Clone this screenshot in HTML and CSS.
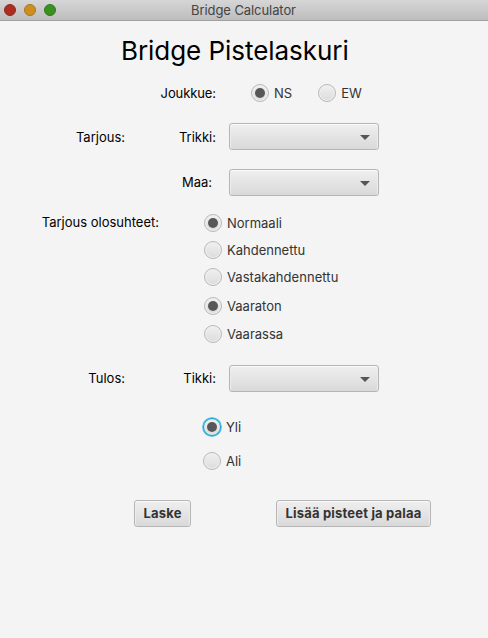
FILE: index.html
```html
<!DOCTYPE html>
<html lang="fi">
<head>
<meta charset="utf-8">
<title>Bridge Calculator</title>
<link rel="stylesheet" href="styles.css">
</head>
<body>
<header class="titlebar">
  <div class="lights"><i class="light red"></i><i class="light yellow"></i><i class="light green"></i></div>
  <span class="caption">Bridge Calculator</span>
</header>
<main>
  <h1>Bridge Pistelaskuri</h1>
  <section class="row team">
    <span class="label"></span><span class="sub joukkue">Joukkue:</span>
    <div class="teams">
      <div class="radio on"><i></i><span>NS</span></div>
      <div class="radio"><i></i><span>EW</span></div>
    </div>
  </section>
  <section class="row trick">
    <span class="label">Tarjous:</span><span class="sub">Trikki:</span><div class="combo"></div>
  </section>
  <section class="row suit">
    <span class="label"></span><span class="sub maa">Maa:</span><div class="combo"></div>
  </section>
  <section class="row terms">
    <span class="label wide">Tarjous olosuhteet:</span>
    <div class="options">
      <div class="radio on"><i></i><span>Normaali</span></div>
      <div class="radio"><i></i><span>Kahdennettu</span></div>
      <div class="radio"><i></i><span class="vasta">Vastakahdennettu</span></div>
      <div class="radio on"><i></i><span>Vaaraton</span></div>
      <div class="radio"><i></i><span>Vaarassa</span></div>
    </div>
  </section>
  <section class="row result">
    <span class="label">Tulos:</span><span class="sub">Tikki:</span><div class="combo"></div>
  </section>
  <section class="overunder">
    <div class="radio on focus"><i></i><span>Yli</span></div>
    <div class="radio"><i></i><span>Ali</span></div>
  </section>
  <footer class="actions">
    <button class="calc">Laske</button>
    <button class="add">Lisää pisteet ja palaa</button>
  </footer>
</main>
</body>
</html>
```
FILE: styles.css
```css
* { box-sizing: border-box; }
body {
  margin: 0;
  height: 638px;
  background: #f4f4f4;
  color: #000;
  font: 13px/18px Inter, "Liberation Sans", sans-serif;
  white-space: nowrap;
}
.titlebar {
  display: grid;
  grid-template-columns: 1fr auto 1fr;
  height: 21px;
  padding: 0 3px 1px 4px;
  background: linear-gradient(#d6d6d6, #bdbdbd);
  border-bottom: 1px solid #a0a0a0;
}
.lights { display: flex; gap: 8px; padding-top: 4px; }
.light { width: 12px; height: 12px; border-radius: 50%; border: 1px solid; }
.red { background: #ad2e21; border-color: #8f2a20; }
.yellow { background: #cd8e1e; border-color: #a9761f; }
.green { background: #39921f; border-color: #317a1d; }
.caption { margin-left: -2px; color: #444; font-size: 13px; letter-spacing: -0.08px; line-height: 21px; }
h1 {
  width: 228px;
  margin: 11px 0 0 121px;
  font-size: 26px;
  font-weight: 400;
  letter-spacing: -0.05px;
  line-height: 38px;
}
.row { display: flex; align-items: center; }
.label { width: 125px; text-align: right; }
.sub { width: 91px; margin-right: 13px; text-align: right; }
.joukkue { letter-spacing: -0.1px; }
.maa { padding-right: 4px; }
.team { height: 18px; margin-top: 14px; }
.teams { display: flex; gap: 26px; margin-left: 22px; }
.trick { margin-top: 21px; }
.suit { margin-top: 19px; }
.combo {
  display: flex;
  align-items: center;
  justify-content: flex-end;
  width: 150px;
  height: 27px;
  padding-right: 8px;
  border: 1px solid #b5b5b5;
  border-radius: 3px;
  background: linear-gradient(#efefef, #d9d9d9);
  box-shadow: inset 0 1px #fafafa, inset 1px 0 #ededed, inset -1px 0 #ededed;
}
.combo::after {
  content: "";
  margin-top: 2px;
  border: 5px solid transparent;
  border-top: 5px solid #555;
  border-bottom: 0;
}
.radio { display: flex; align-items: center; gap: 5px; height: 18px; color: #333; }
.radio i {
  display: grid;
  place-items: center;
  width: 18px;
  height: 18px;
  border: 1px solid #b8b8b8;
  border-radius: 50%;
  background: linear-gradient(#f0f0f0, #dcdcdc);
  box-shadow: inset 0 0 0 1px #f1f1f1;
}
.on i::after { content: ""; width: 10px; height: 10px; border-radius: 50%; background: #575757; }
.focus i { border-color: #0b9bd0; box-shadow: 0 0 0 0.8px #35b3df, inset 0 0 0 1px #d8edf3; }
.terms { align-items: flex-start; margin-top: 18px; }
.wide { width: 160px; margin: -1px 45px 0 -1px; }
.options { display: grid; grid-template-rows: 27px 27px 29px 28px 18px; }
.vasta { letter-spacing: 0.05px; }
.result { margin-top: 22px; }
.result .label, .result .sub, .suit .sub { padding-bottom: 2px; }
.overunder { display: grid; gap: 16px; margin: 26px 0 0 203px; }
.actions { display: flex; gap: 85px; margin: 30px 0 0 134px; }
button {
  height: 27px;
  padding: 0;
  border: 1px solid #b5b5b5;
  border-radius: 3px;
  background: linear-gradient(#efefef, #d9d9d9);
  box-shadow: inset 0 1px #fafafa, inset 1px 0 #ededed, inset -1px 0 #ededed;
  color: #333;
  font: 700 13px/25px Inter, "Liberation Sans", sans-serif;
  letter-spacing: 0.19px;
}
.calc { width: 57px; }
.add { width: 155px; }
```
